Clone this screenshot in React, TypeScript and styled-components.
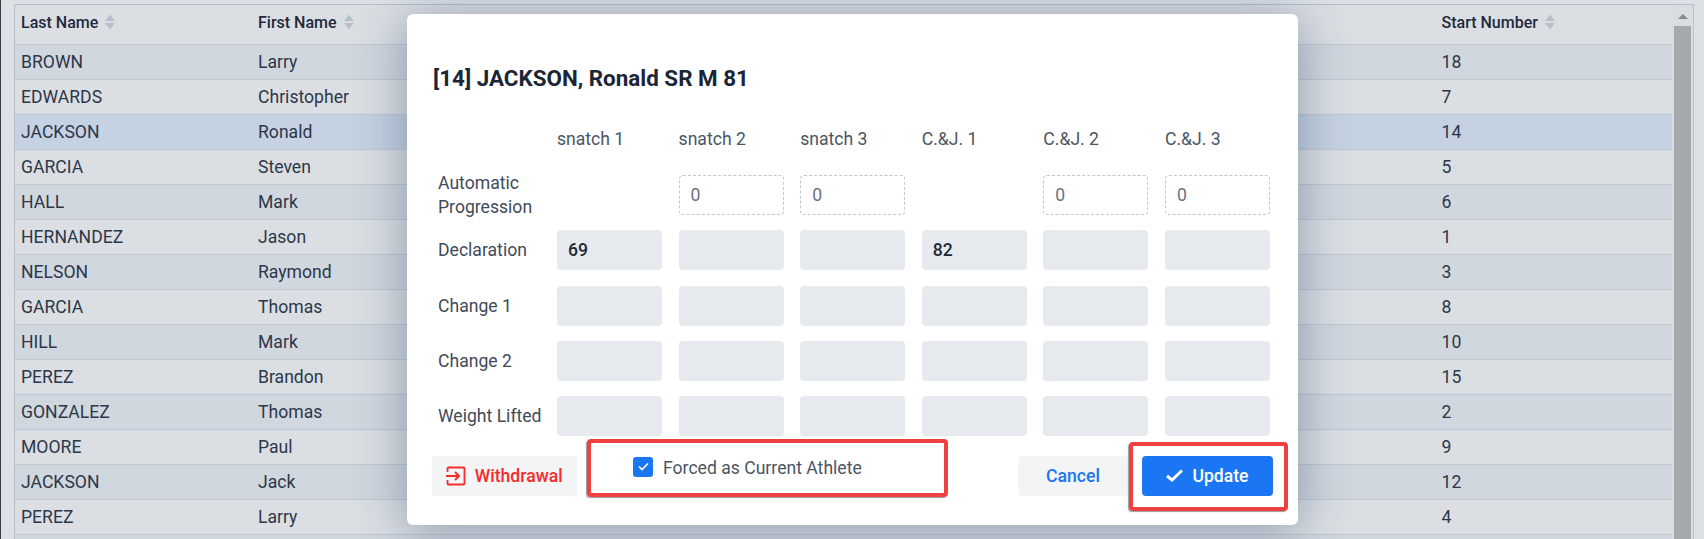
import styled, { createGlobalStyle } from "styled-components";

const GlobalStyle = createGlobalStyle`
  html, body {
    margin: 0;
    padding: 0;
    width: 1704px;
    height: 539px;
    overflow: hidden;
    background: #dde1e6;
    font-family: Roboto, "Liberation Sans", sans-serif;
  }
`;

const Page = styled.div`
  position: relative;
  width: 1704px;
  height: 539px;
  overflow: hidden;
  box-sizing: border-box;
  padding: 4px 0 0 13px;
  background: #dde1e6;
  border-left: 1px solid #3a3d42;
`;

const TableFrame = styled.div`
  display: flex;
  width: 1680px;
  height: 560px;
  border: 1px solid #b6c0cc;
  box-sizing: border-box;
`;

const Table = styled.div`
  flex: 1;
  min-width: 0;
`;

const Row = styled.div<{ $bg: string }>`
  display: grid;
  grid-template-columns: 237px 1183.5px 1fr;
  align-items: center;
  height: 35px;
  box-sizing: border-box;
  padding-left: 6px;
  border-bottom: 1px solid #bdc7d3;
  background: ${({ $bg }) => $bg};
  color: #2d3748;
  font-size: 17.6px;
`;

const HeaderRow = styled(Row)`
  height: 40px;
  padding-bottom: 5px;
  font-size: 16px;
  font-weight: 500;
  color: #1f2a3c;
`;

const HeaderCell = styled.div`
  display: flex;
  align-items: center;
  gap: 7px;
`;

const Scrollbar = styled.div`
  width: 21px;
  flex-shrink: 0;
  background: #d9dde1;
  display: flex;
  flex-direction: column;
  align-items: center;
  padding-top: 9px;
  box-sizing: border-box;
  gap: 7px;
`;

const ScrollArrow = styled.div`
  width: 0;
  height: 0;
  border-left: 5px solid transparent;
  border-right: 5px solid transparent;
  border-bottom: 5px solid #86898e;
`;

const ScrollThumb = styled.div`
  width: 17px;
  flex: 1;
  background: #a5a9ac;
`;

const Modal = styled.div`
  position: absolute;
  left: 406px;
  top: 14px;
  width: 891px;
  height: 511px;
  box-sizing: border-box;
  padding: 50px 26px 0 26px;
  background: #fff;
  border-radius: 6px;
  box-shadow: 0 6px 50px 2px rgba(60, 80, 110, 0.46);
  color: #1a2536;
`;

const Title = styled.h2`
  margin: 0;
  font-size: 22.4px;
  line-height: 28px;
  font-weight: 700;
  color: #1a2636;
`;

const Grid = styled.div`
  display: grid;
  grid-template-columns: 107.4px repeat(6, 105px);
  column-gap: 16.6px;
  grid-template-rows: 37px 40px 40px 40px 40px 40px;
  row-gap: 15.4px;
  margin-top: 30.5px;
  align-items: center;
`;

const ColumnHead = styled.div`
  margin-top: -4px;
  font-size: 17.6px;
  color: #4b5563;
`;

const RowLabel = styled.div`
  padding-left: 5px;
  font-size: 17.6px;
  line-height: 24px;
  color: #3f4a5a;
  white-space: nowrap;
`;

const Cell = styled.div<{ $kind: "auto" | "fill" | "none" }>`
  box-sizing: border-box;
  height: 40px;
  padding: 0 11px;
  display: flex;
  align-items: center;
  border-radius: 4px;
  font-size: 17.6px;
  ${({ $kind }) =>
    $kind === "auto"
      ? "border: 1px dashed #c2c7cf; color: #6b7280;"
      : $kind === "fill"
        ? "background: #e6e9ee; color: #1f2937; font-weight: 500;"
        : ""}
`;

const Footer = styled.div`
  display: flex;
  align-items: center;
  margin: 19.4px -1px 0 -1px;
  height: 40px;
`;

const Button = styled.div<{ $variant: "light" | "primary" }>`
  display: flex;
  align-items: center;
  justify-content: center;
  height: 40px;
  box-sizing: border-box;
  border-radius: 4px;
  font-size: 17.6px;
  font-weight: 500;
  ${({ $variant }) =>
    $variant === "primary"
      ? "background: #1a76f2; color: #fff;"
      : "background: #f3f4f6; color: #1a76f2;"}
`;

const WithdrawButton = styled(Button)`
  width: 144.5px;
  gap: 9px;
  color: #f82a2a;
`;

const CheckRow = styled.div`
  display: flex;
  align-items: center;
  gap: 10px;
  margin-left: 56.5px;
  margin-top: -18px;
  font-size: 17.6px;
  color: #4b5563;
`;

const CheckLabel = styled.span`
  margin-top: 3px;
`;

const CheckBox = styled.div`
  width: 20px;
  height: 20px;
  border-radius: 3px;
  background: #1a76f2;
  display: flex;
  align-items: center;
  justify-content: center;
`;

const FooterActions = styled.div`
  display: flex;
  gap: 14px;
  margin-left: auto;
`;

const CancelButton = styled(Button)`
  width: 110px;
`;

const UpdateButton = styled(Button)`
  width: 131px;
  gap: 9px;
`;

const Highlight = styled.div`
  position: absolute;
  box-sizing: border-box;
  border: 4px solid #ef4040;
  border-radius: 4px;
  box-shadow: -1px 1px 1px rgba(0, 0, 0, 0.4);
`;

const CheckHighlight = styled(Highlight)`
  left: 180px;
  top: 425px;
  width: 361px;
  height: 58px;
`;

const UpdateHighlight = styled(Highlight)`
  left: 722px;
  top: 428px;
  width: 159px;
  height: 69px;
`;

const SortIcon = () => (
  <svg width="10" height="16" viewBox="0 0 10 16" fill="#b9bfc8">
    <path d="M5 0.5 L10 7 H0 Z" />
    <path d="M0 9 H10 L5 15.5 Z" />
  </svg>
);

const rows = [
  ["BROWN", "Larry", "18"],
  ["EDWARDS", "Christopher", "7"],
  ["JACKSON", "Ronald", "14"],
  ["GARCIA", "Steven", "5"],
  ["HALL", "Mark", "6"],
  ["HERNANDEZ", "Jason", "1"],
  ["NELSON", "Raymond", "3"],
  ["GARCIA", "Thomas", "8"],
  ["HILL", "Mark", "10"],
  ["PEREZ", "Brandon", "15"],
  ["GONZALEZ", "Thomas", "2"],
  ["MOORE", "Paul", "9"],
  ["JACKSON", "Jack", "12"],
  ["PEREZ", "Larry", "4"],
  ["", "", ""],
];

const columns = ["snatch 1", "snatch 2", "snatch 3", "C.&J. 1", "C.&J. 2", "C.&J. 3"];
const blank = ["", "", "", "", "", ""];
const declaration = ["69", "", "", "82", "", ""];
const formRows = [
  { label: "Declaration", values: declaration },
  { label: "Change 1", values: blank },
  { label: "Change 2", values: blank },
  { label: "Weight Lifted", values: blank },
];

const rowColor = (index: number) => {
  if (index === 2) return "#c5d2e3";
  return index % 2 === 0 ? "#d1d7df" : "#dbdfe4";
};

export default function App() {
  return (
    <>
      <GlobalStyle />
      <Page>
        <TableFrame>
          <Table>
            <HeaderRow $bg="#dbdfe4">
              <HeaderCell>
                Last Name <SortIcon />
              </HeaderCell>
              <HeaderCell>
                First Name <SortIcon />
              </HeaderCell>
              <HeaderCell>
                Start Number <SortIcon />
              </HeaderCell>
            </HeaderRow>
            {rows.map((r, i) => (
              <Row key={i} $bg={rowColor(i)}>
                <div>{r[0]}</div>
                <div>{r[1]}</div>
                <div>{r[2]}</div>
              </Row>
            ))}
          </Table>
          <Scrollbar>
            <ScrollArrow />
            <ScrollThumb />
          </Scrollbar>
        </TableFrame>
        <Modal>
          <Title>[14] JACKSON, Ronald SR M 81</Title>
          <Grid>
            <div />
            {columns.map((c) => (
              <ColumnHead key={c}>{c}</ColumnHead>
            ))}
            <RowLabel>
              Automatic
              <br />
              Progression
            </RowLabel>
            {[0, 1, 2, 3, 4, 5].map((i) =>
              i === 0 || i === 3 ? (
                <Cell key={i} $kind="none" />
              ) : (
                <Cell key={i} $kind="auto">
                  0
                </Cell>
              )
            )}
            {formRows.flatMap((row) => [
              <RowLabel key={row.label}>{row.label}</RowLabel>,
              ...row.values.map((v, i) => (
                <Cell key={row.label + i} $kind="fill">
                  {v}
                </Cell>
              )),
            ])}
          </Grid>
          <Footer>
            <WithdrawButton $variant="light">
              <svg width="20" height="20" viewBox="0 0 20 20" fill="none" stroke="#f82a2a" strokeWidth="1.8">
                <path d="M1.5 6 V2.5 a1 1 0 0 1 1 -1 H17.5 a1 1 0 0 1 1 1 V17.5 a1 1 0 0 1 -1 1 H2.5 a1 1 0 0 1 -1 -1 V14" />
                <path d="M0 10 H13 M9 6 L13 10 L9 14" />
              </svg>
              Withdrawal
            </WithdrawButton>
            <CheckRow>
              <CheckBox>
                <svg width="11" height="9" viewBox="0 0 11 9" fill="none" stroke="#fff" strokeWidth="1.6">
                  <path d="M1 4.5 L4 7.5 L10 1.5" />
                </svg>
              </CheckBox>
              <CheckLabel>Forced as Current Athlete</CheckLabel>
            </CheckRow>
            <FooterActions>
              <CancelButton $variant="light">Cancel</CancelButton>
              <UpdateButton $variant="primary">
                <svg width="17" height="13" viewBox="0 0 17 13" fill="none" stroke="#fff" strokeWidth="3">
                  <path d="M1 7 L6 11 L16 1.5" />
                </svg>
                Update
              </UpdateButton>
            </FooterActions>
          </Footer>
          <CheckHighlight />
          <UpdateHighlight />
        </Modal>
      </Page>
    </>
  );
}
